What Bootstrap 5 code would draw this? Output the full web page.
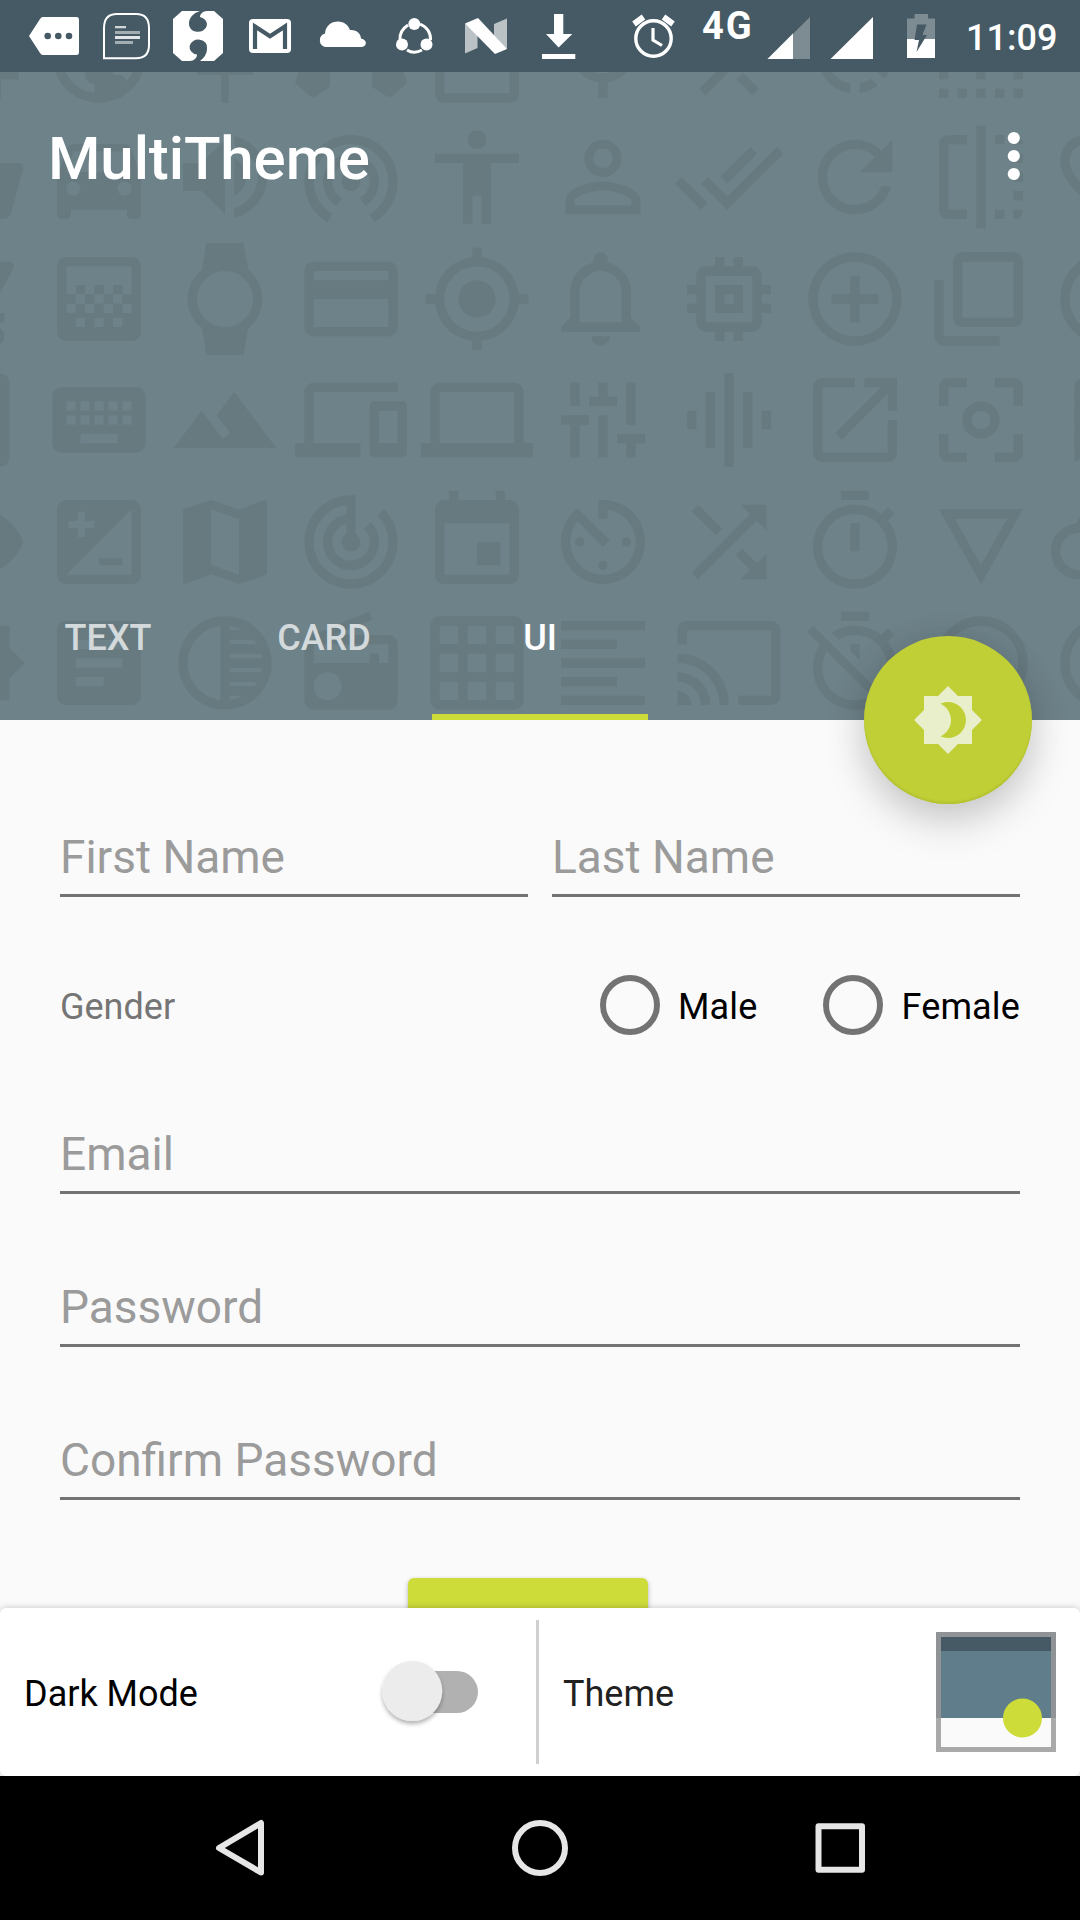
<!DOCTYPE html>
<html lang="en">
<head>
<meta charset="utf-8">
<meta name="viewport" content="width=device-width, initial-scale=1">
<title>MultiTheme</title>
<link href="https://cdn.jsdelivr.net/npm/bootstrap@5.3.0/dist/css/bootstrap.min.css" rel="stylesheet">
<style>
:root{--primary:#6e828a;--primary-dark:#455a64;--accent:#cddc39;--motif:#677a80}
html{font-size:16px}
body{width:1080px;height:1920px;overflow:hidden;background:#fafafa;font-family:Roboto,"Liberation Sans",sans-serif;font-size:36px;line-height:1;color:#000}
svg{display:block;flex:none}
.statusbar{height:72px;background:var(--primary-dark);padding-left:18px;color:#fff;fill:#fff}
.net-label{width:50px;margin-left:10px;padding-top:7px;font-size:38px;line-height:38px;font-weight:700;letter-spacing:2px}
.clock{width:112px;padding:19px 0 0 10px;font-size:36px;line-height:38px;font-weight:500}
.hero{height:648px;background:var(--primary)}
.pattern{position:absolute;left:-83.6px;top:-72.5px;display:grid;grid-template-columns:repeat(10,112px);column-gap:14.120px;row-gap:9.500px;fill:var(--motif)}
.pattern svg{width:112px;height:112px}
.topbar{height:172px;padding:0 40px 4px 48px}
.title-text{font-size:60px;line-height:70px;font-weight:500;color:#fff;padding-top:6px;letter-spacing:-.1px}
.tabs .nav-link{width:216px;height:144px;padding:0 0 14px;font-size:36px;font-weight:500;color:#d4dadc;border-bottom:6px solid transparent;border-radius:0;display:flex;justify-content:center;align-items:center}
.tabs .nav-link.active{color:#fff;border-bottom-color:var(--accent)}
.fab{position:absolute;right:48px;bottom:-84px;width:168px;height:168px;background:#c0cf36;box-shadow:0 18px 42px rgba(0,0,0,.17),0 4px 36px rgba(0,0,0,.08),inset 0 -2px 2px #b3c130;z-index:3;fill:#eaefcb}
.form-area{height:888px;padding:107px 60px 0;overflow:hidden}
.field{height:70px;border-bottom:3px solid #737373;font-size:46px;line-height:60px;color:#9b9b9b}
.field-first{margin-top:89px}
.field-next{margin-top:83px}
.gender{height:60px;margin-top:78px}
.gender-label{color:#757575;padding-top:3px}
.radio-dot{width:60px;height:60px;border:6px solid #737373;border-radius:50%}
.radio-text{padding:3px 0 0 18px;letter-spacing:.15px}
.radio-text+.radio-dot{margin-left:66px}
.submit{width:240px;height:108px;margin:78px 0 0 348px;border-radius:6px;background:var(--accent);box-shadow:0 2px 5px rgba(0,0,0,.3)}
.panel{height:168px;background:#fff;border-radius:6px;box-shadow:0 0 7px rgba(0,0,0,.22);z-index:2;padding:0 24px}
.panel-left{width:512px;padding-right:46px}
.panel-text{padding-top:3px}
.panel-rule{width:3px;height:144px;background:#d0d0d0}
.theme-text{margin-left:24px;color:#212121}
.swatch{width:120px;height:120px}
.sysnav{height:144px;background:#000}
</style>
</head>
<body class="d-flex flex-column">
<header class="statusbar d-flex">
<svg width="72" height="72" viewBox="18 0 72 72"><path fill-rule="evenodd" d="M43 17H76.500Q79 17 79 20V52Q79 55 76.500 55H43Q41 55 40 53L29 36 40 19Q41 17 43 17ZM47.700 32.700a3.300 3.300 0 100 6.600 3.300 3.300 0 000-6.600ZM58.300 32.700a3.300 3.300 0 100 6.600 3.300 3.300 0 000-6.600ZM69 32.700a3.300 3.300 0 100 6.600 3.300 3.300 0 000-6.600Z"/></svg>
<svg width="72" height="72" viewBox="90 0 72 72"><path d="M104 58.200V28Q104 14 117 14H136Q149 14 149 28V45Q149 58.200 136 58.200Z" fill="none" stroke="#fff" stroke-width="2"/><path opacity=".75" d="M115 26h11v2.300h-11z"/><path opacity=".5" d="M115 31h25v3h-25zM115 41h18v3h-18z"/><path opacity=".85" d="M115 36h25v3h-25z"/></svg>
<svg width="72" height="72" viewBox="162 0 72 72"><path d="M182 11H200C193 13 189 18 189 23.500A9 7.500 0 1 0 200 17C200 14 203 11 207 11H214L223 19V53L214 61H200C204 58 207 54 207 48.500A8.800 7.500 0 1 0 197 54.500C197 58 194 61 190 61H182L173 53V19Z"/></svg>
<svg width="72" height="72" viewBox="234 0 72 72"><rect x="249" y="19" width="42" height="34" rx="4"/><path d="M255 49V26.500L270 36.300 285 26.500V49" fill="none" stroke="#455a64" stroke-width="4.200"/></svg>
<svg width="72" height="72" viewBox="306 0 72 72"><path d="M325 47A7 7 0 0 1 325 33.500C325.500 26 331 21.500 338 21.500 344 21.500 348 25 350 30 357 29.500 361 34 361 38.500 368 40 367 47 361 47Z"/></svg>
<svg width="72" height="72" viewBox="378 0 72 72"><g fill="none" stroke="#fff"><path stroke-width="3" d="M408 25Q399 31 400 40M420 24Q431 29 430.500 40"/><path stroke-width="3" d="M407 50Q414 54.500 422 50"/></g><circle cx="414.300" cy="24" r="6"/><circle cx="402" cy="44.500" r="6"/><circle cx="426.500" cy="44.500" r="6"/></svg>
<svg width="72" height="72" viewBox="450 0 72 72"><path opacity=".63" d="M465 23.500L477.500 33V48L465 53.500ZM494 24L507 18.500V49L494 39Z"/><path d="M465 23.500L478 18 507 49 495 54Z"/></svg>
<svg width="72" height="72" viewBox="522 0 72 72"><path d="M554 14h9.300v20h9L558.600 47.500 546 34h8zM542 54h33.300v5H542z"/></svg>
<svg class="ms-4" width="60" height="72" viewBox="618 0 60 72"><g fill="none" stroke="#fff"><circle cx="653.500" cy="38.500" r="17.700" stroke-width="3.400"/><path stroke-width="3.200" d="M653 28V40L662 45.500"/><path stroke-width="6" d="M634 24L643.500 17M673 24L663.500 17"/></g></svg>
<div class="net-label flex-shrink-0 text-nowrap ms-4">4G</div>
<svg width="204" height="72" viewBox="752 0 204 72"><path opacity=".3" d="M767.500 59L810 17V59Z"/><path d="M767.500 59L793 33.500V59ZM830.500 59L873 17V59Z"/><g><path opacity=".3" d="M914.500 14h13.500v4.500h7V39h-28V18.500h7.500z"/><path d="M907 39h28v19h-28z"/><path fill="#455a64" d="M917 24.500h9.500L922.500 35H927L916.500 52 919 40H914.500Z"/></g></svg>
<div class="clock text-nowrap">11:09</div>
</header>

<section class="hero position-relative flex-shrink-0">
<div class="position-absolute top-0 start-0 w-100 h-100 overflow-hidden">
<div class="pattern">
<svg viewBox="0 0 24 24"><path d="M16.800 13h1.400v2H22v2h-3.800v4h-1.400z"/></svg>
<svg viewBox="0 0 24 24"><path d="M12 2C6.480 2 2 6.480 2 12s4.480 10 10 10 10-4.480 10-10S17.520 2 12 2zm-1 17.930c-3.950-.490-7-3.850-7-7.930 0-.620.080-1.210.210-1.790L9 15v1c0 1.100.900 2 2 2v1.930zm6.900-2.540c-.260-.810-1-1.390-1.900-1.390h-1v-3c0-.550-.450-1-1-1H8v-2h2c.550 0 1-.450 1-1V7h2c1.100 0 2-.900 2-2v-.410c2.930 1.190 5 4.060 5 7.410 0 2.080-.800 3.970-2.100 5.390z"/></svg>
<svg viewBox="0 0 24 24"><path d="M16 12V4H17V2H7V4H8V12L6 14V16H11.200V22H12.800V16H18V14L16 12Z"/></svg>
<svg viewBox="0 0 24 24"><path d="M.3 14H7.500V18.100Q7.500 18.500 7.200 18.800L4.300 20.600Q3.600 21 3 20.400L.4 18.200Q-.2 17.500.3 16.700L1.500 14ZM16.500 14H22.500L23.700 16.700Q24.200 17.500 23.600 18.200L21 20.400Q20.400 21 19.700 20.600L16.800 18.800Q16.500 18.500 16.500 18.100Z"/></svg>
<svg viewBox="0 0 24 24"><path fill-rule="evenodd" d="M5 4H19Q21 4 21 6V20Q21 22 19 22H5Q3 22 3 20V6Q3 4 5 4ZM5 8V20H19V8Z"/></svg>
<svg viewBox="0 0 24 24"><path fill-rule="evenodd" d="M12 3.700a7 7 0 011 13.930V21h-2v-3.370A7 7 0 0112 3.700zm0 2a5 5 0 100 10 5 5 0 000-10z"/></svg>
<svg viewBox="0 0 24 24"><path d="M17 20.410L18.410 19 15 15.590 13.590 17 17 20.410zM7.500 8H11v5.590L5.590 19 7 20.410l6-6V8h3.500L12 3.500 7.500 8z"/></svg>
<svg viewBox="0 0 24 24"><path d="M15.550 5.550L11 1v3.070C7.060 4.560 4 7.920 4 12s3.050 7.440 7 7.930v-2.020c-2.840-.480-5-2.940-5-5.910s2.160-5.430 5-5.910V10l4.550-4.450zM19.930 11c-.170-1.390-.720-2.730-1.620-3.890l-1.420 1.420c.540.750.880 1.600 1.020 2.470h2.020zM13 17.900v2.020c1.390-.170 2.740-.710 3.900-1.610l-1.440-1.440c-.750.540-1.590.890-2.460 1.030zm3.890-2.420l1.420 1.410c.900-1.160 1.450-2.500 1.620-3.890h-2.020c-.140.870-.480 1.720-1.020 2.480z"/></svg>
<svg viewBox="0 0 24 24"><path d="M3 19h2v2H3zM7 19h2v2H7zM11 19h2v2h-2zM15 19h2v2h-2zM19 19h2v2h-2zM3 15h2v2H3zM11 15h2v2h-2zM19 15h2v2h-2z"/></svg>
<svg viewBox="0 0 24 24"></svg>

<svg viewBox="0 0 24 24"><path d="M17.210 9l-4.380-6.560c-.190-.280-.510-.420-.830-.420-.320 0-.640.140-.830.430L6.790 9H2c-.550 0-1 .450-1 1 0 .090.010.180.040.270l2.540 9.270c.230.840 1 1.460 1.920 1.460h13c.920 0 1.690-.620 1.930-1.460l2.540-9.270L23 10c0-.550-.450-1-1-1h-4.790zM9 9l3-4.400L15 9H9z"/></svg>
<svg viewBox="0 0 24 24"><path d="M18.920 6.010C18.720 5.420 18.160 5 17.500 5h-11c-.660 0-1.210.420-1.420 1.010L3 12v8c0 .550.450 1 1 1h1c.550 0 1-.450 1-1v-1h12v1c0 .550.450 1 1 1h1c.550 0 1-.450 1-1v-8l-2.080-5.990zM6.500 16c-.830 0-1.500-.670-1.500-1.500S5.670 13 6.500 13s1.500.670 1.500 1.500S7.330 16 6.500 16zm11 0c-.830 0-1.500-.670-1.500-1.500s.670-1.500 1.500-1.500 1.500.670 1.500 1.500-.670 1.500-1.500 1.500zM5 11l1.500-4.500h11L19 11H5z"/></svg>
<svg viewBox="0 0 24 24"><path d="M3 9v6h4l5 5V4L7 9H3zm13.500 3c0-1.770-1.020-3.290-2.500-4.030v8.050c1.480-.730 2.500-2.250 2.500-4.020zM14 3.230v2.060c2.890.860 5 3.540 5 6.710s-2.110 5.850-5 6.710v2.060c4.010-.910 7-4.490 7-8.770s-2.990-7.860-7-8.770z"/></svg>
<svg viewBox="0 0 24 24"><path d="M12 11c-1.100 0-2 .900-2 2s.900 2 2 2 2-.900 2-2-.900-2-2-2zm6 2c0-3.310-2.690-6-6-6s-6 2.690-6 6c0 2.220 1.210 4.150 3 5.190l1-1.740c-1.190-.700-2-1.970-2-3.450 0-2.210 1.790-4 4-4s4 1.790 4 4c0 1.480-.810 2.750-2 3.450l1 1.740c1.790-1.040 3-2.970 3-5.190zM12 3C6.480 3 2 7.480 2 13c0 3.700 2.010 6.920 4.990 8.650l1-1.730C5.610 18.530 4 15.960 4 13c0-4.420 3.580-8 8-8s8 3.580 8 8c0 2.960-1.610 5.530-4 6.920l1 1.730c2.990-1.730 5-4.950 5-8.650 0-5.520-4.480-10-10-10z"/></svg>
<svg viewBox="0 0 24 24"><path d="M12 2c1.100 0 2 .900 2 2s-.900 2-2 2-2-.900-2-2 .900-2 2-2zm9 7h-6v13h-2v-6h-2v6H9V9H3V7h18v2z"/></svg>
<svg viewBox="0 0 24 24"><path d="M12 5.900c1.160 0 2.100.940 2.100 2.100s-.940 2.100-2.100 2.100S9.900 9.160 9.900 8s.940-2.100 2.100-2.100m0 9c2.970 0 6.100 1.460 6.100 2.100v1.100H5.900V17c0-.640 3.130-2.100 6.100-2.100M12 4C9.790 4 8 5.790 8 8s1.790 4 4 4 4-1.790 4-4-1.790-4-4-4zm0 9c-2.670 0-8 1.340-8 4v3h16v-3c0-2.660-5.330-4-8-4z"/></svg>
<svg viewBox="0 0 24 24"><path d="M18 7l-1.410-1.410-6.340 6.340 1.410 1.410L18 7zm4.240-1.410L11.660 16.170 7.480 12l-1.410 1.410L11.660 19l12-12-1.420-1.410zM.41 13.410L6 19l1.410-1.410L1.830 12 .41 13.410z"/></svg>
<svg viewBox="0 0 24 24"><path d="M17.650 6.350C16.200 4.900 14.210 4 12 4c-4.420 0-7.990 3.580-7.990 8s3.570 8 7.990 8c3.730 0 6.840-2.550 7.730-6h-2.080c-.820 2.330-3.040 4-5.650 4-3.310 0-6-2.690-6-6s2.690-6 6-6c1.660 0 3.140.690 4.220 1.780L13 11h7V4l-2.350 2.350z"/></svg>
<svg viewBox="0 0 24 24"><path d="M15 21h2v-2h-2v2zm4-12h2V7h-2v2zM3 5v14c0 1.100.900 2 2 2h4v-2H5V5h4V3H5c-1.100 0-2 .900-2 2zm16-2v2h2c0-1.100-.900-2-2-2zm-8 20h2V1h-2v22zm8-6h2v-2h-2v2zM15 5h2V3h-2v2zm4 8h2v-2h-2v2zm0 8c1.100 0 2-.900 2-2h-2v2z"/></svg>
<svg viewBox="0 0 24 24"><path d="M16.500 3c-1.740 0-3.410.810-4.500 2.090C10.910 3.810 9.240 3 7.500 3 4.420 3 2 5.420 2 8.500c0 3.780 3.400 6.860 8.550 11.540L12 21.350l1.450-1.320C18.600 15.360 22 12.280 22 8.500 22 5.420 19.580 3 16.500 3zm-4.400 15.550l-.1.100-.1-.1C7.140 14.240 4 11.390 4 8.500 4 6.500 5.500 5 7.500 5c1.540 0 3.040.990 3.570 2.360h1.870C13.460 5.990 14.960 5 16.500 5c2 0 3.500 1.500 3.500 3.500 0 2.890-3.140 5.740-7.900 10.050z"/></svg>

<svg viewBox="0 0 24 24"><path d="M7 18c-1.100 0-1.990.900-1.990 2S5.900 22 7 22s2-.900 2-2-.900-2-2-2zM1 2v2h2l3.600 7.590-1.350 2.450c-.160.280-.250.610-.250.960 0 1.100.900 2 2 2h12v-2H7.420c-.140 0-.250-.110-.250-.250l.030-.120.900-1.630h7.450c.750 0 1.410-.410 1.750-1.030l3.580-6.490c.080-.140.120-.310.120-.480 0-.550-.450-1-1-1H5.210l-.940-2H1zm16 16c-1.100 0-1.990.900-1.990 2s.890 2 1.990 2 2-.900 2-2-.900-2-2-2z"/></svg>
<svg viewBox="0 0 24 24"><path d="M11 9h2v2h-2zm-2 2h2v2H9zm4 0h2v2h-2zm2-2h2v2h-2zM7 9h2v2H7zm12-6H5c-1.100 0-2 .900-2 2v14c0 1.100.900 2 2 2h14c1.100 0 2-.900 2-2V5c0-1.100-.900-2-2-2zM9 18H7v-2h2v2zm4 0h-2v-2h2v2zm4 0h-2v-2h2v2zm2-7h-2v2h2v2h-2v-2h-2v2h-2v-2h-2v2H9v-2H7v2H5v-2h2v-2H5V5h14v6z"/></svg>
<svg viewBox="0 0 24 24"><path d="M20 12c0-2.540-1.190-4.810-3.040-6.270L16 0H8l-.950 5.730C5.190 7.190 4 9.450 4 12s1.190 4.810 3.050 6.270L8 24h8l.960-5.730C18.810 16.810 20 14.540 20 12zM6 12c0-3.310 2.690-6 6-6s6 2.690 6 6-2.690 6-6 6-6-2.690-6-6z"/></svg>
<svg viewBox="0 0 24 24"><path d="M20 4H4c-1.110 0-1.990.890-1.990 2L2 18c0 1.110.890 2 2 2h16c1.110 0 2-.890 2-2V6c0-1.110-.890-2-2-2zm0 14H4v-6h16v6zm0-10H4V6h16v2z"/></svg>
<svg viewBox="0 0 24 24"><path d="M12 8c-2.210 0-4 1.790-4 4s1.790 4 4 4 4-1.790 4-4-1.790-4-4-4zm8.940 3c-.460-4.170-3.770-7.480-7.940-7.940V1h-2v2.060C6.830 3.520 3.520 6.830 3.060 11H1v2h2.060c.460 4.170 3.770 7.480 7.940 7.940V23h2v-2.060c4.170-.460 7.480-3.770 7.940-7.940H23v-2h-2.060zM12 19c-3.870 0-7-3.130-7-7s3.130-7 7-7 7 3.130 7 7-3.130 7-7 7z"/></svg>
<svg viewBox="0 0 24 24"><path d="M11.500 22c1.100 0 2-.900 2-2h-4c0 1.100.900 2 2 2zm6.500-6v-5.500c0-3.070-2.130-5.640-5-6.320V3.500c0-.830-.670-1.500-1.500-1.500S10 2.670 10 3.500v.680c-2.870.680-5 3.250-5 6.320V16l-2 2v1h17v-1l-2-2zm-2 1H7v-6.500C7 8.010 9.010 6 11.500 6S16 8.010 16 10.500V17z"/></svg>
<svg viewBox="0 0 24 24"><path d="M15 9H9v6h6V9zm-2 4h-2v-2h2v2zm8-2V9h-2V7c0-1.100-.900-2-2-2h-2V3h-2v2h-2V3H9v2H7c-1.100 0-2 .900-2 2v2H3v2h2v2H3v2h2v2c0 1.100.900 2 2 2h2v2h2v-2h2v2h2v-2h2c1.100 0 2-.900 2-2v-2h2v-2h-2v-2h2zm-4 6H7V7h10v10z"/></svg>
<svg viewBox="0 0 24 24"><path d="M13 7h-2v4H7v2h4v4h2v-4h4v-2h-4V7zm-1-5C6.480 2 2 6.480 2 12s4.480 10 10 10 10-4.480 10-10S17.520 2 12 2zm0 18c-4.410 0-8-3.590-8-8s3.590-8 8-8 8 3.590 8 8-3.590 8-8 8z"/></svg>
<svg viewBox="0 0 24 24"><path d="M4 8H2v12c0 1.100.900 2 2 2h12v-2H4V8zM19 2H8c-1.100 0-2 .900-2 2v12c0 1.100.900 2 2 2h11c1.100 0 2-.900 2-2V4c0-1.100-.900-2-2-2zm0 14H8V4h11z"/></svg>
<svg viewBox="0 0 24 24"><circle cx="12" cy="12" r="9" fill="none" stroke="#677a80" stroke-width="2"/></svg>

<svg viewBox="0 0 24 24"><rect x="4" y="2" width="16" height="20" rx="2"/></svg>
<svg viewBox="0 0 24 24"><path d="M20 5H4c-1.100 0-1.990.900-1.990 2L2 17c0 1.100.900 2 2 2h16c1.100 0 2-.900 2-2V7c0-1.100-.900-2-2-2zm-9 3h2v2h-2V8zm0 3h2v2h-2v-2zM8 8h2v2H8V8zm0 3h2v2H8v-2zm-1 2H5v-2h2v2zm0-3H5V8h2v2zm9 7H8v-2h8v2zm0-4h-2v-2h2v2zm0-3h-2V8h2v2zm3 3h-2v-2h2v2zm0-3h-2V8h2v2z"/></svg>
<svg viewBox="0 0 24 24"><path d="M14 6l-3.750 5 2.850 3.800-1.600 1.200C9.810 13.750 7 10 7 10l-6 8h22L14 6z"/></svg>
<svg viewBox="0 0 24 24"><path d="M4 6h18V4H4c-1.100 0-2 .900-2 2v11H0v3h14v-3H4V6zm19 2h-6c-.550 0-1 .450-1 1v10c0 .550.450 1 1 1h6c.550 0 1-.450 1-1V9c0-.550-.450-1-1-1zm-1 9h-4v-7h4v7z"/></svg>
<svg viewBox="0 0 24 24"><path d="M22 17V6c0-1.100-.900-2-2-2H4c-1.100 0-2 .900-2 2v11H0v3h24v-3zM4 6h16v11H4z"/></svg>
<svg viewBox="0 0 24 24"><path d="M5 4h2v5H5zM3 11h6v2H7v7H5v-7H3zM11 4h2v3h2v2H9V7h2zM11 11h2v9h-2zM17 4h2v9h-2zM15 15h6v2h-2v3h-2v-3h-2z"/></svg>
<svg viewBox="0 0 24 24"><path d="M7 18h2V6H7v12zm4 4h2V2h-2v20zm-8-8h2v-4H3v4zm12 4h2V6h-2v12zm4-8v4h2v-4h-2z"/></svg>
<svg viewBox="0 0 24 24"><path d="M19 19H5V5h7V3H5c-1.110 0-2 .900-2 2v14c0 1.100.890 2 2 2h14c1.100 0 2-.900 2-2v-7h-2v7zM14 3v2h3.590l-9.830 9.830 1.410 1.410L19 6.410V10h2V3h-7z"/></svg>
<svg viewBox="0 0 24 24"><path d="M5 15H3v4c0 1.100.900 2 2 2h4v-2H5v-4zM5 5h4V3H5c-1.100 0-2 .900-2 2v4h2V5zm14-2h-4v2h4v4h2V5c0-1.100-.900-2-2-2zm0 16h-4v2h4c1.100 0 2-.900 2-2v-4h-2v4zM12 8c-2.210 0-4 1.790-4 4s1.790 4 4 4 4-1.790 4-4-1.790-4-4-4zm0 6c-1.100 0-2-.900-2-2s.900-2 2-2 2 .900 2 2-.900 2-2 2z"/></svg>
<svg viewBox="0 0 24 24"><path d="M17 3H7c-1.100 0-1.990.900-1.990 2L5 21l7-3 7 3V5c0-1.100-.900-2-2-2zm0 15l-5-2.180L7 18V5h10v13z"/></svg>

<svg viewBox="0 0 24 24"><path d="M12 4.500C7 4.500 2.730 7.610 1 12c1.730 4.390 6 7.500 11 7.500s9.270-3.110 11-7.500c-1.730-4.390-6-7.500-11-7.500z"/></svg>
<svg viewBox="0 0 24 24"><path d="M19 3H5c-1.100 0-2 .900-2 2v14c0 1.100.900 2 2 2h14c1.100 0 2-.900 2-2V5c0-1.100-.900-2-2-2zM5.500 7.500h2v-2H9v2h2V9H9v2H7.500V9h-2V7.500zM19 19H5L19 5v14zm-2-2v-1.500h-5V17h5z"/></svg>
<svg viewBox="0 0 24 24"><path d="M20.500 3l-.160.030L15 5.100 9 3 3.360 4.900c-.210.070-.360.250-.360.480V20.500c0 .280.220.500.500.500l.160-.030L9 18.900l6 2.100 5.640-1.900c.210-.070.360-.250.360-.480V3.500c0-.280-.220-.500-.500-.500zM15 19l-6-2.110V5l6 2.110V19z"/></svg>
<svg viewBox="0 0 24 24"><path d="M19.070 4.930l-1.410 1.410C19.100 7.790 20 9.790 20 12c0 4.420-3.580 8-8 8s-8-3.580-8-8c0-4.080 3.050-7.440 7-7.930v2.020C8.160 6.570 6 9.030 6 12c0 3.310 2.690 6 6 6s6-2.690 6-6c0-1.660-.670-3.160-1.760-4.240l-1.410 1.410C15.550 9.900 16 10.900 16 12c0 2.210-1.790 4-4 4s-4-1.790-4-4c0-1.860 1.280-3.410 3-3.860v2.140c-.600.350-1 .980-1 1.720 0 1.100.900 2 2 2s2-.900 2-2c0-.740-.400-1.380-1-1.720V2h-1C6.480 2 2 6.480 2 12s4.480 10 10 10 10-4.480 10-10c0-2.760-1.120-5.260-2.930-7.070z"/></svg>
<svg viewBox="0 0 24 24"><path d="M17 12h-5v5h5v-5zM16 1v2H8V1H6v2H5c-1.110 0-1.990.900-1.990 2L3 19c0 1.100.890 2 2 2h14c1.100 0 2-.900 2-2V5c0-1.100-.900-2-2-2h-1V1h-2zm3 18H5V8h14v11z"/></svg>
<svg viewBox="0 0 24 24"><path d="M11 17c0 .550.450 1 1 1s1-.450 1-1-.450-1-1-1-1 .450-1 1zm0-14v4h2V5.080c3.390.490 6 3.390 6 6.920 0 3.870-3.130 7-7 7s-7-3.130-7-7c0-1.680.590-3.220 1.580-4.420L12 13l1.410-1.410-6.800-6.800v.020C4.420 6.450 3 9.050 3 12c0 4.970 4.020 9 9 9 4.970 0 9-4.030 9-9s-4.030-9-9-9h-1zm7 9c0-.550-.450-1-1-1s-1 .450-1 1 .450 1 1 1 1-.450 1-1zM6 12c0 .550.450 1 1 1s1-.450 1-1-.450-1-1-1-1 .450-1 1z"/></svg>
<svg viewBox="0 0 24 24"><path d="M10.590 9.170L5.410 4 4 5.410l5.170 5.170 1.420-1.410zM14.500 4l2.040 2.040L4 18.590 5.410 20 17.960 7.460 20 9.500V4h-5.500zm.33 9.410l-1.410 1.410 3.130 3.130L14.500 20H20v-5.500l-2.040 2.040-3.130-3.130z"/></svg>
<svg viewBox="0 0 24 24"><path d="M15 1H9v2h6V1zm-4 13h2V8h-2v6zm8.030-6.610l1.420-1.420c-.430-.510-.900-.990-1.410-1.410l-1.420 1.420C16.070 4.740 14.120 4 12 4c-4.970 0-9 4.030-9 9s4.020 9 9 9 9-4.030 9-9c0-2.120-.740-4.070-1.970-5.610zM12 20c-3.870 0-7-3.130-7-7s3.130-7 7-7 7 3.130 7 7-3.130 7-7 7z"/></svg>
<svg viewBox="0 0 24 24"><path d="M3 5l9 16 9-16H3zm3.380 2h11.250L12 17 6.380 7z"/></svg>
<svg viewBox="0 0 24 24"><path d="M19.350 10.040C18.670 6.590 15.640 4 12 4 9.110 4 6.600 5.640 5.350 8.040 2.340 8.360 0 10.910 0 14c0 3.310 2.690 6 6 6h13c2.760 0 5-2.240 5-5 0-2.640-2.050-4.780-4.650-4.960zM19 18H6c-2.210 0-4-1.790-4-4s1.790-4 4-4h.710C7.370 7.690 9.480 6 12 6c3.040 0 5.500 2.460 5.500 5.500v.500H19c1.660 0 3 1.340 3 3s-1.340 3-3 3z"/></svg>

<svg viewBox="0 0 24 24"><path d="M20 15.310L23.310 12 20 8.690V4H4v16h16z"/></svg>
<svg viewBox="0 0 24 24"><path d="M19 3H5c-1.100 0-2 .900-2 2v14c0 1.100.900 2 2 2h14c1.100 0 2-.900 2-2V5c0-1.100-.900-2-2-2zM13 17H7v-2h6v2zm4-4H7v-2h10v2zm0-4H7V7h10v2z"/></svg>
<svg viewBox="0 0 24 24"><path d="M12 2C6.480 2 2 6.480 2 12s4.480 10 10 10 10-4.480 10-10S17.520 2 12 2zm-1 17.930c-3.940-.490-7-3.850-7-7.930s3.050-7.440 7-7.930v15.860zm2-15.860c1.030.130 2 .450 2.870.930H13v-.930zM13 7h5.240c.250.310.480.650.680 1H13V7zm0 3h6.740c.080.330.150.660.190 1H13v-1zm0 9.930V19h2.870c-.870.480-1.840.800-2.870.930zM18.240 17H13v-1h5.920c-.200.350-.430.690-.680 1zm1.500-3H13v-1h6.930c-.040.340-.110.670-.190 1z"/></svg>
<svg viewBox="0 0 24 24"><path d="M3.240 6.150C2.510 6.430 2 7.170 2 8v12c0 1.100.890 2 2 2h16c1.110 0 2-.900 2-2V8c0-1.110-.890-2-2-2H8.300l8.260-3.340L15.880 1 3.240 6.150zM7 20c-1.660 0-3-1.340-3-3s1.340-3 3-3 3 1.340 3 3-1.340 3-3 3zm13-8h-2v-2h-2v2H4V8h16v4z"/></svg>
<svg viewBox="0 0 24 24"><path d="M20 2H4c-1.100 0-2 .900-2 2v16c0 1.100.900 2 2 2h16c1.100 0 2-.900 2-2V4c0-1.100-.900-2-2-2zM8 20H4v-4h4v4zm0-6H4v-4h4v4zm0-6H4V4h4v4zm6 12h-4v-4h4v4zm0-6h-4v-4h4v4zm0-6h-4V4h4v4zm6 12h-4v-4h4v4zm0-6h-4v-4h4v4zm0-6h-4V4h4v4z"/></svg>
<svg viewBox="0 0 24 24"><path d="M15 15H3v2h12v-2zm0-8H3v2h12V7zM3 13h18v-2H3v2zm0 8h18v-2H3v2zM3 3v2h18V3H3z"/></svg>
<svg viewBox="0 0 24 24"><path d="M21 3H3c-1.100 0-2 .900-2 2v3h2V5h18v14h-7v2h7c1.100 0 2-.900 2-2V5c0-1.100-.900-2-2-2zM1 18v3h3c0-1.660-1.340-3-3-3zm0-4v2c2.760 0 5 2.240 5 5h2c0-3.870-3.130-7-7-7zm0-4v2c4.970 0 9 4.030 9 9h2c0-6.080-4.930-11-11-11z"/></svg>
<svg viewBox="0 0 24 24"><path d="M19.040 4.550l-1.420 1.420C16.070 4.740 14.120 4 12 4c-1.830 0-3.530.550-4.950 1.480l1.460 1.460C9.530 6.350 10.730 6 12 6c3.870 0 7 3.130 7 7 0 1.270-.350 2.470-.940 3.490l1.450 1.450C20.450 16.530 21 14.830 21 13c0-2.120-.740-4.070-1.970-5.610l1.420-1.420-1.410-1.420zM15 1H9v2h6V1zm-4 8.440l2 2V8h-2v1.440zM3.020 4L1.750 5.270 4.500 8.030C3.550 9.450 3 11.160 3 13c0 4.970 4.020 9 9 9 1.840 0 3.550-.550 4.980-1.500l2.500 2.500 1.270-1.270-7.710-7.710L3.020 4zM12 20c-3.870 0-7-3.130-7-7 0-1.280.350-2.480.950-3.520l9.560 9.560c-1.030.610-2.230.960-3.510.960z"/></svg>
<svg viewBox="0 0 24 24"><circle cx="12" cy="12" r="9" fill="none" stroke="#677a80" stroke-width="2"/></svg>
<svg viewBox="0 0 24 24"><circle cx="12" cy="12" r="9" fill="none" stroke="#677a80" stroke-width="2"/></svg>
</div>
</div>
<div class="position-relative h-100 d-flex flex-column justify-content-between">
<div class="topbar d-flex justify-content-between align-items-center">
<div class="title-text">MultiTheme</div>
<svg width="52" height="72" viewBox="988 120 52 72" fill="#fff"><circle cx="1013.800" cy="138" r="6.100"/><circle cx="1013.800" cy="156" r="6.100"/><circle cx="1013.800" cy="174" r="6.100"/></svg>
</div>
<nav class="nav tabs">
<a class="nav-link">TEXT</a>
<a class="nav-link">CARD</a>
<a class="nav-link active">UI</a>
</nav>
</div>
<div class="fab rounded-circle d-flex align-items-center justify-content-center">
<svg width="72" height="72" viewBox="0 0 24 24"><path d="M20 8.690V4h-4.690L12 .690 8.690 4H4v4.690L.690 12 4 15.310V20h4.690L12 23.310 15.310 20H20v-4.690L23.310 12 20 8.690zM12 18c-.890 0-1.740-.200-2.500-.550C11.560 16.500 13 14.420 13 12s-1.440-4.500-3.500-5.450C10.260 6.200 11.110 6 12 6c3.310 0 6 2.690 6 6s-2.690 6-6 6z"/></svg>
</div>
</section>

<main class="form-area flex-shrink-0">
<div class="d-flex gap-4">
<div class="field flex-fill w-50">First Name</div>
<div class="field flex-fill w-50">Last Name</div>
</div>
<div class="gender d-flex align-items-center">
<div class="gender-label me-auto">Gender</div>
<div class="radio-dot"></div><div class="radio-text">Male</div>
<div class="radio-dot"></div><div class="radio-text">Female</div>
</div>
<div class="field field-first">Email</div>
<div class="field field-next">Password</div>
<div class="field field-next">Confirm Password</div>
<div class="submit"></div>
</main>

<section class="panel position-relative d-flex align-items-center flex-shrink-0">
<div class="panel-left d-flex align-items-center justify-content-between flex-shrink-0">
<div class="panel-text">Dark Mode</div>
<svg width="120" height="84" viewBox="370 1650 120 84"><defs><filter id="thumb-shadow" x="-20%" y="-20%" width="140%" height="150%"><feDropShadow dx="0" dy="3" stdDeviation="2" flood-opacity=".3"/></filter></defs><path fill="#b1b1b1" d="M405 1671h52a21 21 0 010 42h-52z"/><circle cx="412.300" cy="1691" r="30" fill="#ececec" filter="url(#thumb-shadow)"/></svg>
</div>
<div class="panel-rule"></div>
<div class="panel-text theme-text">Theme</div>
<svg class="swatch ms-auto" viewBox="0 0 120 120"><path fill="#455a64" d="M0 0h120v19H0z"/><path fill="#607d8b" d="M0 19h120v67H0z"/><path fill="#fafafa" d="M0 86h120v34H0z"/><circle cx="86.500" cy="86" r="19.500" fill="#cddc39"/><path fill="none" stroke="#a9a9a9" stroke-width="5" d="M2.500 86v31.500h115V86"/><path fill="none" stroke="#8f9395" stroke-width="5" d="M2.500 86V2.500h115V86"/></svg>
</section>

<footer class="sysnav d-flex justify-content-center flex-shrink-0">
<svg width="1080" height="144" viewBox="0 1776 1080 144" fill="none" stroke="#e6e6e6" stroke-width="6" stroke-linejoin="round"><path d="M219 1848L261 1823V1872.500Z"/><circle cx="540" cy="1848" r="25"/><rect x="818.500" y="1826.300" width="43.500" height="43.500"/></svg>
</footer>
<script src="https://cdn.jsdelivr.net/npm/bootstrap@5.3.0/dist/js/bootstrap.bundle.min.js"></script>
</body>
</html>
